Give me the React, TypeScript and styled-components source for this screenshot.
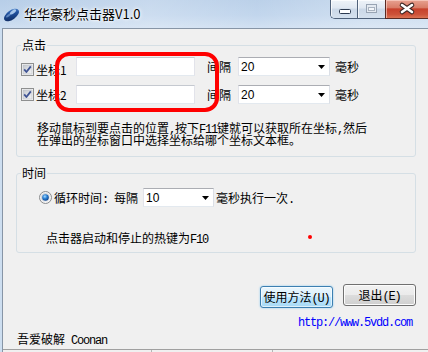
import React from "react";
import styled, { createGlobalStyle } from "styled-components";

const cjk = `"Noto Sans CJK SC", "Noto Sans", sans-serif`;
const mono = `"Liberation Mono", "DejaVu Sans Mono", monospace`;

const GlobalStyle = createGlobalStyle`
  html, body { margin: 0; padding: 0; width: 428px; height: 352px; overflow: hidden; background: #f0f0f0; }
  body { font-family: ${cjk}; font-size: 12px; color: #000; }
  #root { width: 428px; height: 352px; overflow: hidden; }
`;

const Window = styled.div`
  width: 428px;
  height: 376px;
  display: flex;
  flex-direction: column;
  background: #cddef0;
`;

const TitleBar = styled.div`
  height: 28px;
  flex: none;
  display: flex;
  align-items: flex-start;
  background:
    linear-gradient(90deg, rgba(255,255,255,0) 0%, rgba(255,255,255,0.22) 35%, rgba(255,255,255,0.05) 60%, rgba(255,255,255,0.25) 85%),
    linear-gradient(180deg, #b7cee8 0%, #bfd4ec 55%, #cfdff1 100%);
`;

const TitleIcon = styled.svg`
  flex: none;
  margin: 6px 0 0 2px;
`;

const TitleText = styled.div`
  flex: 1;
  margin: 6px 0 0 3px;
  font-family: ${cjk};
  font-size: 13px;
  line-height: 16px;
  color: #000;
  text-shadow: 0 0 5px #fff, 0 0 3px #fff, 0 0 1px #fff;
  white-space: nowrap;
`;

const Caption = styled.div`
  flex: none;
  display: flex;
`;

const CaptionGroup = styled.div`
  display: flex;
  height: 18px;
  border-left: 1px solid #4f6179;
  border-bottom: 1px solid #4f6179;
  border-bottom-left-radius: 5px;
  overflow: hidden;
`;

const CaptionButton = styled.div<{ $w: number }>`
  width: ${(p) => p.$w}px;
  height: 18px;
  background: linear-gradient(180deg, #eef3f8 0%, #dfe7f1 45%, #cbd8e7 50%, #d5e1ee 100%);
  box-shadow: inset 1px 1px 0 rgba(255, 255, 255, 0.7);
  & + & {
    border-left: 1px solid #4f6179;
  }
`;

const CloseButton = styled.div`
  width: 42px;
  height: 18px;
  border-left: 1px solid #5b2a22;
  border-bottom: 1px solid #5b2a22;
  background: linear-gradient(180deg, #e7a291 0%, #d97d68 42%, #c7412c 50%, #cd5239 80%, #dc7354 100%);
  box-shadow: inset 1px 1px 0 rgba(255, 220, 210, 0.6);
`;

const Client = styled.div`
  flex: 1;
  margin-left: 2px;
  display: flex;
  flex-direction: column;
  background: #f0f0f0;
  border-top: 1px solid #8795a6;
  border-left: 1px solid #8795a6;
`;

const ClientBody = styled.div`
  display: flex;
  flex-direction: column;
  padding: 9px 12px 0 13px;
`;

const Group = styled.fieldset<{ $pt: number; $pb: number; $mt?: number }>`
  margin: ${(p) => p.$mt ?? 0}px 0 0 0;
  min-width: 0;
  border: 1px solid #d5dfe5;
  border-radius: 3px;
  padding: ${(p) => p.$pt}px 0 ${(p) => p.$pb}px 4px;
`;

const Legend = styled.legend`
  padding: 0 1px;
  margin: 0;
  font-family: ${cjk};
  font-size: 12px;
  line-height: 14px;
`;

const CoordRows = styled.div`
  position: relative;
  display: flex;
  flex-direction: column;
  gap: 9px;
`;

const Highlight = styled.div`
  position: absolute;
  left: 34px;
  top: -5px;
  width: 164px;
  height: 60px;
  box-sizing: border-box;
  border: 4px solid #ff0000;
  border-radius: 14px;
  pointer-events: none;
`;

const Row = styled.div`
  display: flex;
  align-items: center;
  height: 19px;
`;

const CheckLabel = styled.div<{ $drop?: number }>`
  width: 55px;
  flex: none;
  display: flex;
  align-items: center;
  gap: 2px;
  margin-top: ${(p) => p.$drop ?? 0}px;
  line-height: 13px;
`;

const TextField = styled.div`
  width: 119px;
  height: 19px;
  box-sizing: border-box;
  background: #fff;
  border: 1px solid;
  border-color: #c5c9d0 #e2e3ea #e3e9ef #e2e3ea;
  flex: none;
`;

const Label = styled.span<{ $ml?: number }>`
  margin-left: ${(p) => p.$ml ?? 0}px;
  line-height: 14px;
  white-space: pre;
  flex: none;
`;

const Combo = styled.div<{ $w: number; $ml?: number }>`
  width: ${(p) => p.$w}px;
  height: 19px;
  margin-left: ${(p) => p.$ml ?? 0}px;
  box-sizing: border-box;
  background: #fff;
  border: 1px solid;
  border-color: #abadb3 #dbdfe6 #e3e9ef #e2e3ea;
  display: flex;
  align-items: center;
  padding: 0 4px 0 2px;
  flex: none;
`;

const ComboValue = styled.span`
  flex: 1;
  font-family: "Liberation Sans", Arial, sans-serif;
  font-size: 12px;
  line-height: 14px;
`;

const Half = styled.span`
  font-family: ${mono};
  font-size: 12px;
  letter-spacing: -1.2px;
  line-height: 0;
`;

const Note = styled.div<{ $mt: number; $ml: number }>`
  margin: ${(p) => p.$mt}px 0 0 ${(p) => p.$ml}px;
  line-height: 12px;
  white-space: nowrap;
`;

const GroupInner = styled.div`
  position: relative;
  display: flex;
  flex-direction: column;
`;

const RadioRow = styled.div`
  display: flex;
  align-items: center;
  height: 19px;
  padding-left: 18px;
`;

const RedDot = styled.div`
  position: absolute;
  left: 287px;
  top: 47px;
  width: 4px;
  height: 4px;
  border-radius: 50%;
  background: #ff0000;
`;

const ButtonRow = styled.div`
  display: flex;
  justify-content: flex-end;
  align-items: flex-start;
  gap: 10px;
  margin-top: 31px;
`;

const Button = styled.button<{ $focus?: boolean }>`
  width: 73px;
  height: 22px;
  margin-top: ${(p) => (p.$focus ? 2 : 0)}px;
  padding: 0;
  box-sizing: border-box;
  border: 1px solid ${(p) => (p.$focus ? "#3c7fb1" : "#707070")};
  border-radius: 3px;
  font-family: ${cjk};
  font-size: 12px;
  line-height: 14px;
  color: #000;
  display: flex;
  align-items: center;
  justify-content: center;
  background: ${(p) =>
    p.$focus
      ? "linear-gradient(180deg, #eaf6fd 0%, #d9f0fc 50%, #bee6fd 50%, #a7d9f5 100%)"
      : "linear-gradient(180deg, #f2f2f2 0%, #ebebeb 50%, #dddddd 50%, #cfcfcf 100%)"};
  box-shadow: inset 0 0 0 1px ${(p) => (p.$focus ? "rgba(255,255,255,0.6)" : "#fcfcfc")}
    ${(p) => (p.$focus ? ", 0 0 2px #7ec4ef" : "")};
`;

const ButtonText = styled.span`
  line-height: 14px;
  white-space: nowrap;
`;

const UrlRow = styled.div`
  display: flex;
  justify-content: flex-end;
  margin-top: 9px;
  padding-right: 4px;
  height: 12px;
`;

const Url = styled.span`
  font-family: ${mono};
  font-size: 12px;
  letter-spacing: -1.2px;
  line-height: 12px;
  color: #0000ff;
`;

const Author = styled.div`
  margin-top: 4px;
  padding-left: 1px;
  line-height: 12px;
  height: 12px;
  white-space: pre;
`;

const StatusBar = styled.div`
  margin-top: 4px;
  height: 20px;
  flex: none;
  display: flex;
  border-top: 1px solid #a0a0a0;
  background: #f0f0f0;
`;

const StatusPanel = styled.div<{ $w?: number }>`
  width: ${(p) => (p.$w ? `${p.$w}px` : "auto")};
  flex: ${(p) => (p.$w ? "none" : "1")};
  box-sizing: border-box;
  border-right: ${(p) => (p.$w ? "1px solid #b5b5b5" : "none")};
`;

function CheckBox() {
  return (
    <svg width="13" height="13" viewBox="0 0 13 13" style={{ flex: "none" }}>
      <defs>
        <linearGradient id="cbg" x1="0" y1="0" x2="1" y2="1">
          <stop offset="0" stopColor="#c4c8ce" />
          <stop offset="1" stopColor="#f4f4f5" />
        </linearGradient>
      </defs>
      <rect x="0.5" y="0.5" width="12" height="12" fill="#f6f6f6" stroke="#8e8f8f" />
      <rect x="2" y="2" width="9" height="9" fill="url(#cbg)" stroke="#b9bdc3" strokeWidth="0.6" />
      <path d="M3.2 6.4 L5.4 9 L9.8 3.4" fill="none" stroke="#3f5394" strokeWidth="1.8" strokeLinejoin="round" />
    </svg>
  );
}

function Radio() {
  return (
    <svg width="13" height="13" viewBox="0 0 13 13" style={{ flex: "none", marginRight: 2 }}>
      <defs>
        <radialGradient id="rdot" cx="0.4" cy="0.35" r="0.7">
          <stop offset="0" stopColor="#a9dcff" />
          <stop offset="0.45" stopColor="#2d83d6" />
          <stop offset="1" stopColor="#0b3e86" />
        </radialGradient>
        <linearGradient id="rbg" x1="0" y1="0" x2="1" y2="1">
          <stop offset="0" stopColor="#c7cbd1" />
          <stop offset="1" stopColor="#f5f5f6" />
        </linearGradient>
      </defs>
      <circle cx="6.5" cy="6.5" r="6" fill="#f4f4f4" stroke="#8a8c8e" />
      <circle cx="6.5" cy="6.5" r="4.6" fill="url(#rbg)" />
      <circle cx="6.5" cy="6.5" r="3.3" fill="url(#rdot)" />
    </svg>
  );
}

function Arrow() {
  return (
    <svg width="7" height="4" viewBox="0 0 7 4" style={{ flex: "none" }}>
      <polygon points="0,0 7,0 3.5,4" fill="#000" />
    </svg>
  );
}

export default function App() {
  return (
    <>
      <GlobalStyle />
      <Window>
        <TitleBar>
          <TitleIcon width="19" height="16" viewBox="0 0 19 16">
            <defs>
              <linearGradient id="mouse" x1="0" y1="1" x2="1" y2="0">
                <stop offset="0" stopColor="#0c2556" />
                <stop offset="0.6" stopColor="#1f4f9c" />
                <stop offset="1" stopColor="#5f97dd" />
              </linearGradient>
            </defs>
            <g transform="rotate(-36 9.5 9)">
              <ellipse cx="9.5" cy="9" rx="8.6" ry="4.6" fill="url(#mouse)" />
              <ellipse cx="12.5" cy="7.4" rx="3.6" ry="1.6" fill="#bcd8f6" opacity="0.85" />
              <ellipse cx="7" cy="7.6" rx="3.2" ry="1" fill="#9fc3ee" opacity="0.5" />
            </g>
          </TitleIcon>
          <TitleText>华华豪秒点击器V1.0</TitleText>
          <Caption>
            <CaptionGroup>
              <CaptionButton $w={26}>
                <svg width="26" height="18" viewBox="0 0 26 18">
                  <rect x="8.5" y="9.5" width="11" height="4" rx="1" fill="#fff" stroke="#2d3b50" />
                </svg>
              </CaptionButton>
              <CaptionButton $w={27}>
                <svg width="27" height="18" viewBox="0 0 27 18">
                  <rect x="8.5" y="4.5" width="10" height="8" fill="#e4eaf1" stroke="#98a4b3" />
                  <rect x="10.5" y="7.5" width="6" height="3" fill="#f4f7fa" stroke="#a9b3c0" />
                </svg>
              </CaptionButton>
            </CaptionGroup>
            <CloseButton>
              <svg width="42" height="18" viewBox="0 0 42 18">
                <path d="M16 5 L26 12 M26 5 L16 12" stroke="#3d2624" strokeWidth="4.6" strokeLinecap="round" fill="none" />
                <path d="M16 5 L26 12 M26 5 L16 12" stroke="#ffffff" strokeWidth="2.6" strokeLinecap="round" fill="none" />
              </svg>
            </CloseButton>
          </Caption>
        </TitleBar>
        <Client>
          <ClientBody>
            <Group $pt={5} $pb={10}>
              <Legend>点击</Legend>
              <CoordRows>
                <Highlight />
                <Row>
                  <CheckLabel $drop={6}>
                    <CheckBox />
                    <span>坐标1</span>
                  </CheckLabel>
                  <TextField />
                  <Label $ml={12}>间隔</Label>
                  <Combo $w={92} $ml={7}>
                    <ComboValue>20</ComboValue>
                    <Arrow />
                  </Combo>
                  <Label $ml={5}>毫秒</Label>
                </Row>
                <Row>
                  <CheckLabel>
                    <CheckBox />
                    <span>坐标2</span>
                  </CheckLabel>
                  <TextField />
                  <Label $ml={12}>间隔</Label>
                  <Combo $w={92} $ml={7}>
                    <ComboValue>20</ComboValue>
                    <Arrow />
                  </Combo>
                  <Label $ml={5}>毫秒</Label>
                </Row>
              </CoordRows>
              <Note $mt={18} $ml={16}>
                移动鼠标到要点击的位置<Half>,</Half>按下<Half>F11</Half>键就可以获取所在坐标<Half>,</Half>然后
                <br />
                在弹出的坐标窗口中选择坐标给哪个坐标文本框。
              </Note>
            </Group>
            <Group $pt={8} $pb={8} $mt={9}>
              <Legend>时间</Legend>
              <GroupInner>
                <RedDot />
                <RadioRow>
                  <Radio />
                  <Label>
                    循环时间<Half>: </Half>每隔
                  </Label>
                  <Combo $w={71} $ml={5}>
                    <ComboValue>10</ComboValue>
                    <Arrow />
                  </Combo>
                  <Label $ml={2}>
                    毫秒执行一次<Half>.</Half>
                  </Label>
                </RadioRow>
                <Note $mt={25} $ml={25}>
                  点击器启动和停止的热键为<Half>F10</Half>
                </Note>
              </GroupInner>
            </Group>
            <ButtonRow>
              <Button $focus>
                <ButtonText>
                  使用方法<Half>(U)</Half>
                </ButtonText>
              </Button>
              <Button>
                <ButtonText>
                  退出<Half>(E)</Half>
                </ButtonText>
              </Button>
            </ButtonRow>
            <UrlRow>
              <Url>http://www.5vdd.com</Url>
            </UrlRow>
            <Author>
              吾爱破解<Half> Coonan</Half>
            </Author>
          </ClientBody>
          <StatusBar>
            <StatusPanel $w={149} />
            <StatusPanel $w={121} />
            <StatusPanel />
          </StatusBar>
        </Client>
      </Window>
    </>
  );
}
